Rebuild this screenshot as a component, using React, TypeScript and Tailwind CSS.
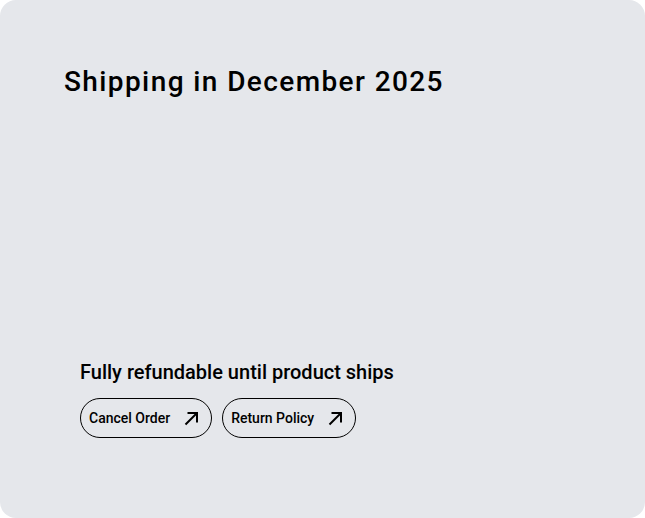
import React from 'react';

const Arrow = () => (
  <svg width="15" height="15" viewBox="0 0 15 15" fill="none" stroke="currentColor" strokeWidth="2" strokeLinecap="butt">
    <path d="M1.5 13.5L13 2" />
    <path d="M3.5 2H13V11.5" />
  </svg>
);

const App = () => {
  const links = ['Cancel Order', 'Return Policy'];

  return (
    <div className="w-[645px] h-[518px] bg-white" style={{ fontFamily: 'Roboto, sans-serif' }}>
      <div className="flex h-full flex-col justify-between rounded-2xl bg-[#e5e7eb] text-black">
        <h1 className="pl-16 pt-[62px] text-[28px] font-medium tracking-wider leading-10">
          Shipping in December 2025
        </h1>
        <div className="pl-20 pb-20">
          <p className="text-xl font-medium leading-7 mb-3">Fully refundable until product ships</p>
          <div className="flex gap-2.5">
            {links.map((link) => (
              <a
                key={link}
                href="#"
                className="flex h-10 items-center gap-3.5 rounded-full border border-black pl-2 pr-3 text-sm font-medium"
              >
                {link}
                <Arrow />
              </a>
            ))}
          </div>
        </div>
      </div>
    </div>
  );
};

export default App;
